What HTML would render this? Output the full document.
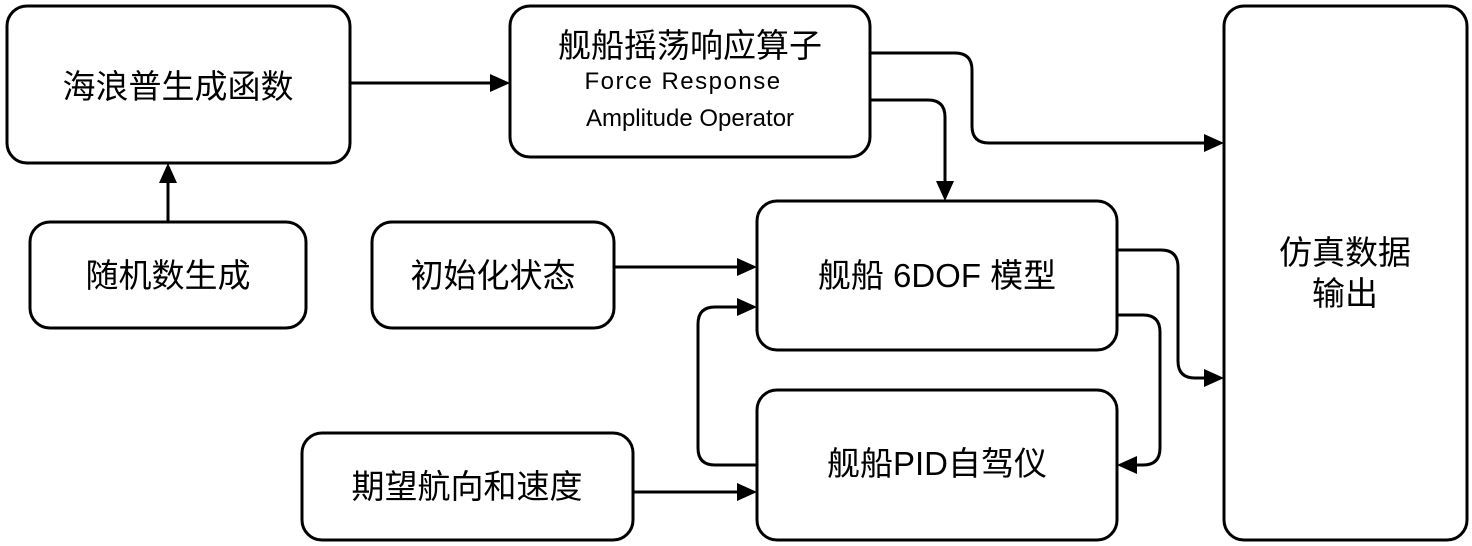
<!DOCTYPE html>
<html><head><meta charset="utf-8"><style>
html,body{margin:0;padding:0;background:#fff;}
svg{display:block}
text{font-family:"Liberation Sans","Noto Sans CJK SC",sans-serif;fill:#000;text-anchor:middle;}
</style></head><body>
<svg width="1472" height="546" viewBox="0 0 1472 546" xmlns="http://www.w3.org/2000/svg">
<g fill="none" stroke="#000" stroke-width="3">
<rect x="7" y="6" width="343" height="157" rx="20"/>
<rect x="30" y="222" width="276" height="106" rx="20"/>
<rect x="510" y="6" width="360" height="151" rx="20"/>
<rect x="372" y="222" width="242" height="106" rx="20"/>
<rect x="757" y="201" width="360" height="149" rx="20"/>
<rect x="302" y="433" width="331" height="107" rx="20"/>
<rect x="757" y="390" width="360" height="150" rx="20"/>
<rect x="1224" y="6" width="243" height="534" rx="20"/>
<path d="M350 83 H492"/>
<path d="M168 222 V182"/>
<path d="M870 53 H955 Q972 53 972 70 V126 Q972 143 989 143 H1206"/>
<path d="M870 100 H928 Q945 100 945 117 V182"/>
<path d="M614 267 H739"/>
<path d="M757 465 H715 Q698 465 698 448 V324 Q698 307 715 307 H739"/>
<path d="M1117 250 H1161 Q1178 250 1178 267 V361 Q1178 378 1195 378 H1206"/>
<path d="M1117 315 H1143 Q1160 315 1160 332 V448 Q1160 465 1143 465 H1135"/>
<path d="M633 492 H739"/>
</g>
<g fill="#000">
<path d="M510 83 L490 74 L490 92Z"/>
<path d="M168 163 L159 183 L177 183Z"/>
<path d="M1224 143 L1204 134 L1204 152Z"/>
<path d="M945 201 L936 181 L954 181Z"/>
<path d="M757 267 L737 258 L737 276Z"/>
<path d="M757 307 L737 298 L737 316Z"/>
<path d="M1224 378 L1204 369 L1204 387Z"/>
<path d="M1117 465 L1137 456 L1137 474Z"/>
<path d="M757 492 L737 483 L737 501Z"/>
</g>
<text x="178" y="98" font-size="33">海浪普生成函数</text>
<text x="168" y="287" font-size="33">随机数生成</text>
<text x="690" y="57" font-size="33">舰船摇荡响应算子</text>
<text x="683" y="89" font-size="24" letter-spacing="1.5">Force Response</text>
<text x="690" y="126" font-size="24">Amplitude Operator</text>
<text x="493" y="287" font-size="33">初始化状态</text>
<text x="937" y="287" font-size="33">舰船 6DOF 模型</text>
<text x="467" y="498" font-size="33">期望航向和速度</text>
<text x="937" y="475" font-size="33">舰船PID自驾仪</text>
<text x="1345" y="264" font-size="33">仿真数据</text>
<text x="1345" y="305" font-size="33">输出</text>
</svg>
</body></html>
